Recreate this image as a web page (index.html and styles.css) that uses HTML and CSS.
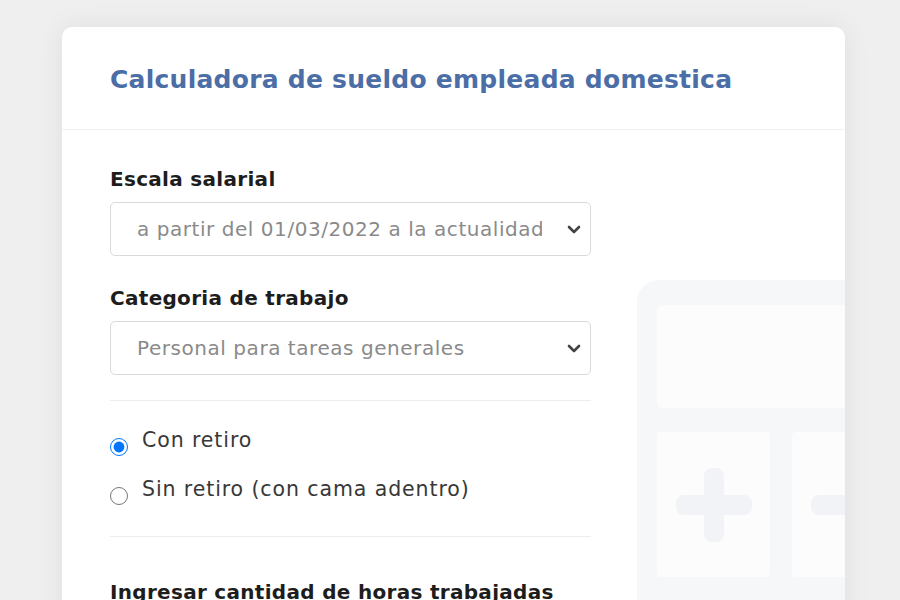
FILE: index.html
```html
<!DOCTYPE html>
<html lang="es">
<head>
<meta charset="utf-8">
<title>Calculadora de sueldo empleada domestica</title>
<link rel="stylesheet" href="styles.css">
</head>
<body>
<div class="card">
  <header class="card-header">
    <h1 class="title">Calculadora de sueldo empleada domestica</h1>
  </header>
  <div class="card-body">
    <form class="form">
      <label class="field-label">Escala salarial</label>
      <div class="select">
        <span class="select-text">a partir del 01/03/2022 a la actualidad</span>
        <svg class="chevron" width="14" height="9" viewBox="0 0 14 9"><path d="M2 2 L7 7 L12 2" fill="none" stroke="#444" stroke-width="2.6" stroke-linecap="round" stroke-linejoin="round"/></svg>
      </div>
      <label class="field-label second">Categoria de trabajo</label>
      <div class="select">
        <span class="select-text">Personal para tareas generales</span>
        <svg class="chevron" width="14" height="9" viewBox="0 0 14 9"><path d="M2 2 L7 7 L12 2" fill="none" stroke="#444" stroke-width="2.6" stroke-linecap="round" stroke-linejoin="round"/></svg>
      </div>
      <hr class="divider first">
      <div class="radios">
        <label class="radio-row"><input type="radio" name="retiro" checked><span>Con retiro</span></label>
        <label class="radio-row"><input type="radio" name="retiro"><span>Sin retiro (con cama adentro)</span></label>
      </div>
      <hr class="divider second">
      <label class="field-label">Ingresar cantidad de horas trabajadas</label>
    </form>
    <div class="illustration">
      <div class="calc-screen"></div>
      <div class="calc-keys">
        <div class="calc-key"><span class="plus-h"></span><span class="plus-v"></span></div>
        <div class="calc-key"><span class="minus"></span></div>
      </div>
    </div>
  </div>
</div>
</body>
</html>
```
FILE: styles.css
```css
html, body {
  margin: 0;
  padding: 0;
}
body {
  background: #efefef;
  font-family: "DejaVu Sans", "Open Sans", sans-serif;
  height: 600px;
  overflow: hidden;
}
.card {
  margin: 27px 55px 0 62px;
  background: #ffffff;
  border-radius: 10px;
  box-shadow: 0 0 28px rgba(0, 0, 0, 0.07);
  overflow: hidden;
  height: 620px;
}
.card-header {
  height: 102px;
  display: flex;
  align-items: center;
  padding: 0 48px;
  border-bottom: 1px solid #f2f2f2;
}
.title {
  margin: 0;
  margin-top: 2px;
  font-size: 25px;
  font-weight: 700;
  color: #4b6ea6;
  letter-spacing: 0.25px;
}
.card-body {
  display: flex;
  padding: 37px 0 0 48px;
  gap: 46px;
}
.form {
  width: 481px;
  flex: none;
  display: flex;
  flex-direction: column;
}
.field-label {
  font-size: 20px;
  font-weight: 700;
  line-height: 24px;
  letter-spacing: 0.3px;
  color: #1d1d1d;
  margin-bottom: 11px;
  white-space: nowrap;
}
.field-label.second {
  margin-top: 30px;
}
.select {
  height: 54px;
  box-sizing: border-box;
  border: 1px solid #dadada;
  border-radius: 5px;
  display: flex;
  align-items: center;
  padding: 0 9px 0 26px;
  gap: 25px;
}
.select-text {
  flex: 1;
  min-width: 0;
  overflow: hidden;
  white-space: nowrap;
  font-size: 20px;
  letter-spacing: 0.55px;
  color: #8a8a8a;
}
.chevron {
  flex: none;
}
.divider {
  border: 0;
  border-top: 1px solid #ededed;
  margin: 0;
  width: 100%;
}
.divider.first {
  margin-top: 25px;
}
.divider.second {
  margin-top: 31px;
  margin-bottom: 43px;
}
.radios {
  display: flex;
  flex-direction: column;
  gap: 21px;
  margin-top: 27px;
}
.radio-row {
  display: flex;
  align-items: flex-start;
  gap: 14px;
  font-size: 20.5px;
  line-height: 24px;
  letter-spacing: 0.9px;
  color: #383838;
}
.radio-row input {
  margin: 10px 0 0 0;
  width: 18px;
  height: 18px;
  flex: none;
}
.illustration {
  margin-top: 113px;
  width: 320px;
  height: 360px;
  flex: none;
  background: #f6f7f9;
  border-radius: 22px;
  padding: 25px 0 0 20px;
  box-sizing: border-box;
}
.calc-screen {
  height: 103px;
  background: #fcfcfd;
  border-radius: 6px;
}
.calc-keys {
  display: grid;
  grid-template-columns: 113px 113px;
  gap: 22px;
  margin-top: 24px;
}
.calc-key {
  height: 145px;
  background: #fcfcfd;
  border-radius: 4px;
  display: grid;
  place-items: center;
}
.plus-h, .plus-v, .minus {
  grid-area: 1 / 1;
  background: #f2f3f6;
  border-radius: 8px;
}
.plus-h, .minus {
  width: 76px;
  height: 20px;
}
.plus-v {
  width: 20px;
  height: 74px;
}
```
